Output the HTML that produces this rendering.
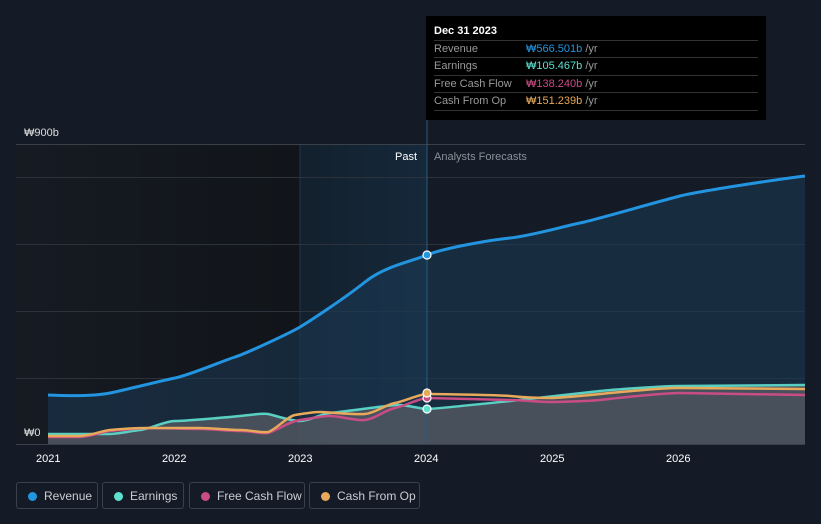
<!DOCTYPE html>
<html><head><style>
body{margin:0;width:821px;height:524px;background:#151b26;font-family:"Liberation Sans",sans-serif;overflow:hidden;position:relative}
.lg{position:absolute;top:482px;height:27px;border:1px solid #3b414c;border-radius:3px;color:#c9cdd3;font-size:12px;line-height:27px;box-sizing:border-box}
.lg i{position:absolute;left:11px;top:9px;width:9px;height:9px;border-radius:50%}
.lg span{position:absolute;left:27px}
.tt{position:absolute;left:426px;top:16px;width:340px;height:104px;background:#000;color:#fff;font-size:11px}
.tt .r{position:absolute;left:8px;width:324px;border-top:1px solid #333;height:17px;line-height:17px;color:#999}
.tt .r b{position:absolute;left:92px;font-weight:normal}
</style></head><body>
<svg width="821" height="524" style="position:absolute;left:0;top:0">
<defs>
<linearGradient id="pd" x1="0" x2="1"><stop offset="0" stop-color="#161b23"/><stop offset="1" stop-color="#111419"/></linearGradient>
<linearGradient id="hb" x1="0" x2="1"><stop offset="0" stop-color="#13202d"/><stop offset="1" stop-color="#15293b"/></linearGradient>
</defs>
<rect x="16" y="145" width="284" height="299" fill="url(#pd)"/>
<rect x="300" y="145" width="127" height="299" fill="url(#hb)"/>
<line x1="300" y1="145" x2="300" y2="444" stroke="#1f3346"/>
<g stroke="#2c323c" stroke-width="1">
<line x1="16" y1="144.5" x2="805" y2="144.5" stroke="#3a404a"/>
<line x1="16" y1="177.5" x2="805" y2="177.5"/>
<line x1="16" y1="244.5" x2="805" y2="244.5"/>
<line x1="16" y1="311.5" x2="805" y2="311.5"/>
<line x1="16" y1="378.5" x2="805" y2="378.5"/>
<line x1="16" y1="444.5" x2="805" y2="444.5" stroke="#3a404a"/>
</g>
<path d="M48,395 C70,396 95,396 110,393 S160,381 175,378 S225,360 235,357 S290,333 300,327 S345,298 365,282 S410,262 427,255 S490,240 510,238 S565,226 580,223 S660,201 680,196 S780,179 805,176 L805,444 L48,444Z" fill="#1c3a55" opacity="0.55"/>
<path d="M48,434 L110,434 C125,433 130,431 140,430 S165,421 175,421 S230,417 240,416 S262,413 268,414 S290,421 300,421 S320,414 330,413 S385,406 395,405 S420,409 427,409 S500,402 510,401 S590,392 600,391 S660,386 680,386 L805,385 L805,444 L48,444Z" fill="#5c6068" opacity="0.7"/>
<line x1="427" y1="120" x2="427" y2="444" stroke="#2a5a80"/>
<path d="M48,395 C70,396 95,396 110,393 S160,381 175,378 S225,360 235,357 S290,333 300,327 S345,298 365,282 S410,262 427,255 S490,240 510,238 S565,226 580,223 S660,201 680,196 S780,179 805,176" fill="none" stroke="#2394df" stroke-width="3"/>
<path d="M48,434 L110,434 C125,433 130,431 140,430 S165,421 175,421 S230,417 240,416 S262,413 268,414 S290,421 300,421 S320,414 330,413 S385,406 395,405 S420,409 427,409 S500,402 510,401 S590,392 600,391 S660,386 680,386 L805,385" fill="none" stroke="#5ee0cf" stroke-width="2.5" opacity="0.9"/>
<path d="M48,437 L80,437 C95,436 100,432 110,431 S140,428 150,428 S190,429 200,429 S230,431 240,431 S262,434 268,433 S290,421 300,420 S320,416 330,416 S355,421 365,420 S385,410 395,408 S420,398 427,398 S500,400 510,400 S540,402 550,402 S590,401 600,400 S660,393 680,393 L805,395" fill="none" stroke="#c94d85" stroke-width="2.5"/>
<path d="M48,436 L80,436 C95,435 100,431 110,430 S140,428 150,428 S190,428 200,428 S230,430 240,430 S262,433 268,432 S288,416 295,415 S312,412 320,412 S355,415 365,414 S385,405 395,403 S420,394 427,394 S500,395 510,396 S540,398 550,398 S590,395 600,394 S660,388 680,388 L805,389" fill="none" stroke="#e8a95a" stroke-width="2.5"/>
<g stroke="#fff" stroke-width="1.2">
<circle cx="427" cy="255" r="4" fill="#2394df"/>
<circle cx="427" cy="409" r="4" fill="#5ee0cf"/>
<circle cx="427" cy="398" r="4" fill="#c94d85"/>
<circle cx="427" cy="393" r="4" fill="#e8a95a"/>
</g>
<g font-size="11" fill="#fff">
<text x="24" y="136" fill="#ddd">₩900b</text>
<text x="24" y="436" fill="#ddd">₩0</text>
<text x="395" y="160">Past</text>
<text x="434" y="160" fill="#8a9099">Analysts Forecasts</text>
<text x="36" y="462">2021</text><text x="162" y="462">2022</text><text x="288" y="462">2023</text><text x="414" y="462">2024</text><text x="540" y="462">2025</text><text x="666" y="462">2026</text>
</g>
</svg>
<div class="tt">
<div style="position:absolute;left:8px;top:9px;font-weight:bold;font-size:11px">Dec 31 2023</div>
<div class="r" style="top:24px">Revenue<b><span style="color:#2394df">₩566.501b</span> /yr</b></div>
<div class="r" style="top:41px">Earnings<b><span style="color:#5ee0cf">₩105.467b</span> /yr</b></div>
<div class="r" style="top:59px">Free Cash Flow<b><span style="color:#c94d85">₩138.240b</span> /yr</b></div>
<div class="r" style="top:76px">Cash From Op<b><span style="color:#e8a95a">₩151.239b</span> /yr</b></div>
<div style="position:absolute;left:8px;top:94px;width:324px;border-top:1px solid #333"></div>
</div>
<div class="lg" style="left:16px;width:82px"><i style="background:#2394df"></i><span>Revenue</span></div>
<div class="lg" style="left:102px;width:82px"><i style="background:#5ee0cf"></i><span>Earnings</span></div>
<div class="lg" style="left:189px;width:116px"><i style="background:#c94d85"></i><span>Free Cash Flow</span></div>
<div class="lg" style="left:309px;width:111px"><i style="background:#e8a95a"></i><span>Cash From Op</span></div>
</body></html>
